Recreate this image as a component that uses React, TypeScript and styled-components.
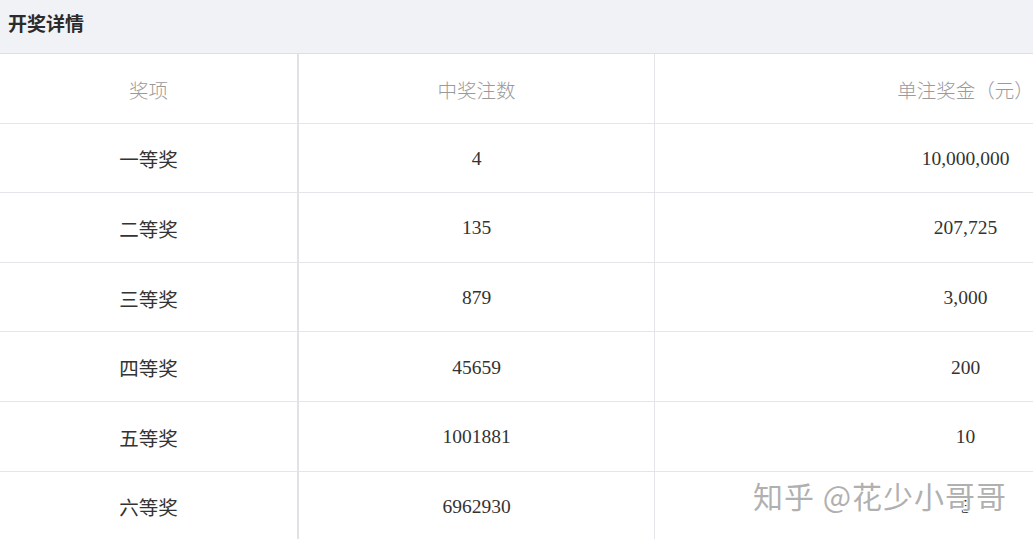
import React from 'react';
import styled, { createGlobalStyle } from 'styled-components';

const GlobalStyle = createGlobalStyle`
    html, body {
        margin: 0;
        padding: 0;
        background: #fff;
        overflow: hidden;
    }
    body {
        font-family: "Noto Sans CJK SC", "Noto Sans", sans-serif;
    }
`;

const Page = styled.div`
    position: relative;
    width: 1033px;
    height: 539px;
    overflow: hidden;
`;

const TitleBar = styled.div`
    height: 54px;
    background: #f0f2f5;
    border-bottom: 1px solid #dde1e6;
    padding: 9px 0 0 8px;
    box-sizing: border-box;
`;

const Title = styled.h2`
    margin: 0;
    font-size: 19px;
    line-height: 28px;
    font-weight: 700;
    color: #2b2b2b;
`;

const Table = styled.div`
    display: grid;
    grid-template-columns: 299px 356px 622px;
    width: 1277px;
`;

const Cell = styled.div<{ $head?: boolean; $first?: boolean; $num?: boolean }>`
    height: 69.6px;
    box-sizing: border-box;
    display: flex;
    align-items: center;
    justify-content: center;
    padding-top: 2px;
    border-bottom: 1px solid #e3e5e8;
    border-right: ${p => (p.$first ? '2px solid #e0e2e5' : '1px solid #e3e5e8')};
    color: ${p => (p.$head ? '#9a9a9a' : '#333')};
    font-family: ${p => (p.$num ? '"Liberation Serif", serif' : '"Noto Sans CJK SC", sans-serif')};
    font-size: ${p => (p.$num ? '19.5px' : '19.5px')};
    font-weight: ${p => (p.$head ? 300 : 400)};
`;

const Watermark = styled.div`
    position: absolute;
    left: 753px;
    top: 473px;
    font-family: "Noto Sans CJK SC", sans-serif;
    font-size: 30px;
    color: rgba(150, 150, 150, 0.75);
    text-shadow: 1px 1px 0 #fff, -1px -1px 0 #fff, 1px -1px 0 rgba(255,255,255,0.9);
    letter-spacing: 1px;
    pointer-events: none;
`;

const rows = [
    ['一等奖', '4', '10,000,000'],
    ['二等奖', '135', '207,725'],
    ['三等奖', '879', '3,000'],
    ['四等奖', '45659', '200'],
    ['五等奖', '1001881', '10'],
    ['六等奖', '6962930', '5'],
];

const App = () => (
    <Page>
        <GlobalStyle />
        <TitleBar><Title>开奖详情</Title></TitleBar>
        <Table>
            <Cell $head $first>奖项</Cell>
            <Cell $head>中奖注数</Cell>
            <Cell $head>单注奖金（元）</Cell>
            {rows.map(r => (
                <React.Fragment key={r[0]}>
                    <Cell $first>{r[0]}</Cell>
                    <Cell $num>{r[1]}</Cell>
                    <Cell $num>{r[2]}</Cell>
                </React.Fragment>
            ))}
        </Table>
        <Watermark>知乎 @花少小哥哥</Watermark>
    </Page>
);

export default App;
